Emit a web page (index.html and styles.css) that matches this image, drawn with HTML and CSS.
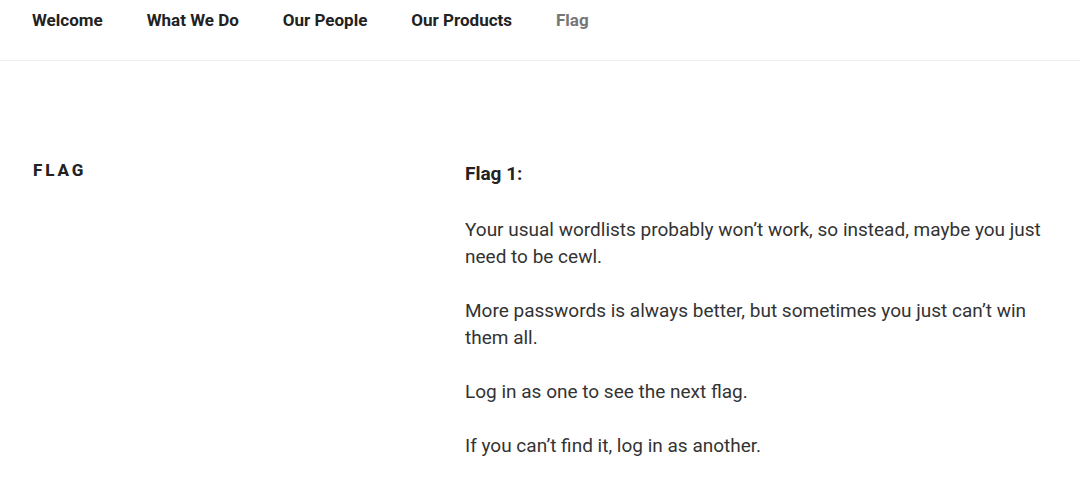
FILE: index.html
```html
<!DOCTYPE html>
<html lang="en">
<head>
<meta charset="utf-8">
<title>Flag</title>
<link rel="stylesheet" href="styles.css">
</head>
<body>
<header class="site-header">
  <nav class="main-nav">
    <a class="nav-link" href="#">Welcome</a>
    <a class="nav-link" href="#">What We Do</a>
    <a class="nav-link" href="#">Our People</a>
    <a class="nav-link" href="#">Our Products</a>
    <a class="nav-link current" href="#">Flag</a>
  </nav>
</header>
<main class="page">
  <header class="entry-header">
    <h1 class="entry-title">Flag</h1>
  </header>
  <div class="entry-content">
    <h2 class="flag-title">Flag 1:</h2>
    <p>Your usual wordlists probably won’t work, so instead, maybe you just need to be cewl.</p>
    <p>More passwords is always better, but sometimes you just can’t win them all.</p>
    <p>Log in as one to see the next flag.</p>
    <p>If you can’t find it, log in as another.</p>
  </div>
</main>
</body>
</html>
```
FILE: styles.css
```css
html, body {
  margin: 0;
  padding: 0;
  background: #fff;
}
body {
  font-family: Roboto, "Open Sans", sans-serif;
  color: #333;
}
.site-header {
  border-bottom: 1px solid #eee;
  height: 61px;
  box-sizing: border-box;
}
.main-nav {
  display: flex;
  gap: 44px;
  padding: 10px 0 0 32px;
}
.nav-link {
  font-size: 17px;
  line-height: 20px;
  font-weight: 700;
  color: #222;
  text-decoration: none;
}
.nav-link.current {
  color: #767676;
}
.page {
  display: grid;
  grid-template-columns: 432px 582px;
  padding: 99px 0 0 33px;
}
.entry-title {
  margin: 0;
  font-size: 17px;
  line-height: 20px;
  font-weight: 800;
  letter-spacing: 2.9px;
  text-transform: uppercase;
  color: #222;
}
.entry-content {
  font-size: 19px;
  line-height: 27px;
}
.flag-title {
  margin: 0 0 29px;
  font-size: 19px;
  line-height: 27px;
  font-weight: 700;
  color: #222;
}
.entry-content p {
  margin: 0 0 27px;
}
```
